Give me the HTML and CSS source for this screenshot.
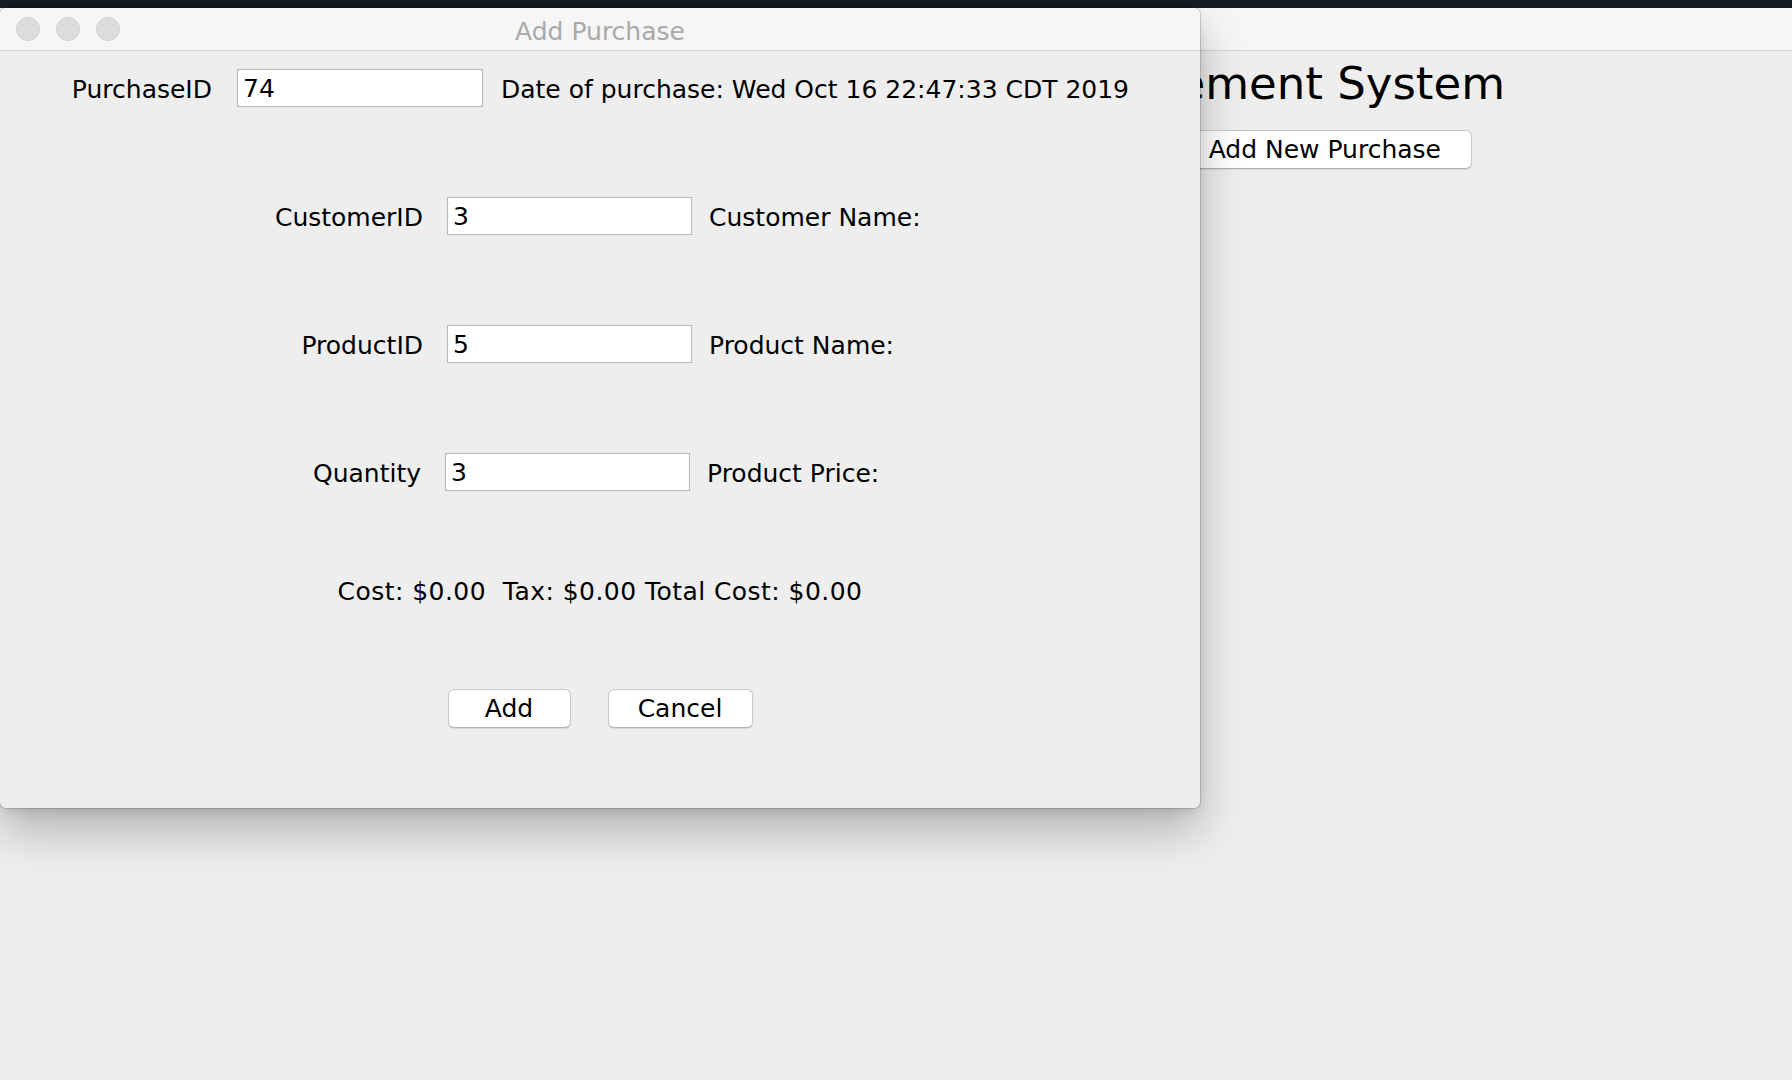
FILE: index.html
```html
<!DOCTYPE html>
<html lang="en">
<head>
<meta charset="utf-8">
<title>Add Purchase</title>
<link rel="stylesheet" href="styles.css">
</head>
<body>
<div class="desktop">
  <div class="menubar"></div>
  <div class="main-window">
    <div class="titlebar"></div>
    <div class="main-content">
      <h1 class="main-heading">Purchase Management System</h1>
      <div class="main-actions"><button class="btn btn-main">Add New Purchase</button></div>
    </div>
  </div>

  <div class="dialog">
    <div class="dialog-titlebar">
      <div class="lights">
        <span class="light"></span>
        <span class="light"></span>
        <span class="light"></span>
      </div>
      <div class="dialog-title">Add Purchase</div>
      <div></div>
    </div>
    <div class="dialog-body">
      <div class="row row-first">
        <span class="label">PurchaseID</span>
        <div class="field">74</div>
        <span class="info">Date of purchase: Wed Oct 16 22:47:33 CDT 2019</span>
      </div>
      <div class="row row-entry">
        <span class="label">CustomerID</span>
        <div class="field">3</div>
        <span class="info">Customer Name:</span>
      </div>
      <div class="row row-entry">
        <span class="label">ProductID</span>
        <div class="field">5</div>
        <span class="info">Product Name:</span>
      </div>
      <div class="row row-entry row-shift">
        <span class="label">Quantity</span>
        <div class="field">3</div>
        <span class="info">Product Price:</span>
      </div>
      <div class="row summary">Cost: $0.00&nbsp;&nbsp;Tax: $0.00 Total Cost: $0.00</div>
      <div class="actions">
        <button class="btn btn-add">Add</button>
        <button class="btn btn-cancel">Cancel</button>
      </div>
    </div>
  </div>
</div>
</body>
</html>
```
FILE: styles.css
```css
html, body {
  margin: 0;
  padding: 0;
}

body {
  background: #181b22;
  font-family: "DejaVu Sans", "Liberation Sans", sans-serif;
  color: #000;
}

.desktop {
  position: relative;
  width: 1792px;
  height: 1080px;
  display: flex;
  flex-direction: column;
  overflow: hidden;
}

.menubar {
  height: 8px;
  flex: none;
  background: #181b22;
}

.main-window {
  flex: 1;
  background: #eeeeee;
  display: flex;
  flex-direction: column;
}

.titlebar {
  height: 42px;
  flex: none;
  background: #f6f6f6;
  border-bottom: 1px solid #d4d4d4;
}

.main-content {
  width: 1505px;
  display: flex;
  flex-direction: column;
  align-items: flex-end;
  padding-top: 6px;
}

.main-heading {
  margin: 0;
  font-size: 45px;
  font-weight: normal;
  line-height: 54px;
  white-space: nowrap;
}

.main-actions {
  margin-top: 19px;
  margin-right: 33px;
}

.btn {
  font-family: inherit;
  font-size: 25px;
  color: #000;
  background: #ffffff;
  border: 1px solid #c8c8c8;
  border-bottom-color: #b2b2b2;
  border-radius: 6px;
  box-shadow: 0 1px 1px rgba(0, 0, 0, 0.1);
  height: 39px;
  padding: 0;
  line-height: 37px;
  box-sizing: border-box;
  white-space: nowrap;
}

.btn-main {
  height: 39px;
  padding: 0 30px 0 40px;
}

.dialog {
  position: absolute;
  left: 0;
  top: 8px;
  width: 1200px;
  height: 800px;
  background: #eeeeee;
  border-radius: 6px;
  overflow: hidden;
  box-shadow: 0 0 0 1px rgba(0, 0, 0, 0.14), 0 22px 46px rgba(0, 0, 0, 0.26), 0 4px 12px rgba(0, 0, 0, 0.08);
}

.dialog-titlebar {
  height: 42px;
  background: #f6f6f6;
  border-bottom: 1px solid #d4d4d4;
  display: grid;
  grid-template-columns: 1fr auto 1fr;
  align-items: center;
}

.lights {
  display: flex;
  gap: 16px;
  padding-left: 16px;
}

.light {
  width: 22px;
  height: 22px;
  border-radius: 50%;
  background: #dcdcdc;
  border: 1px solid #d0d0d0;
}

.dialog-title {
  font-size: 25px;
  color: #a9a9a9;
  padding-top: 4px;
}

.dialog-body {
  display: flex;
  flex-direction: column;
  padding-top: 18px;
  font-size: 25px;
}

.row {
  display: flex;
  align-items: center;
  height: 38px;
  white-space: nowrap;
}

.label,
.info {
  padding-top: 2px;
}

.field {
  height: 38px;
  box-sizing: border-box;
  border: 1px solid #b8b8b8;
  background: #ffffff;
  padding-left: 5px;
  line-height: 38px;
}

.row-first .label {
  width: 212px;
  text-align: right;
}

.row-first .field {
  margin-left: 25px;
  width: 246px;
}

.row-first .info {
  margin-left: 18px;
}

.row-entry {
  margin-top: 90px;
}

.row-entry .label {
  width: 423px;
  text-align: right;
}

.row-entry .field {
  margin-left: 24px;
  width: 245px;
}

.row-entry .info {
  margin-left: 17px;
}

.row-shift .label {
  width: 421px;
}

.summary {
  margin-top: 81px;
  justify-content: center;
  letter-spacing: 0.45px;
}

.actions {
  margin-top: 79px;
  display: flex;
  justify-content: center;
  gap: 37px;
}

.btn-add {
  width: 123px;
}

.btn-cancel {
  width: 145px;
}
```
